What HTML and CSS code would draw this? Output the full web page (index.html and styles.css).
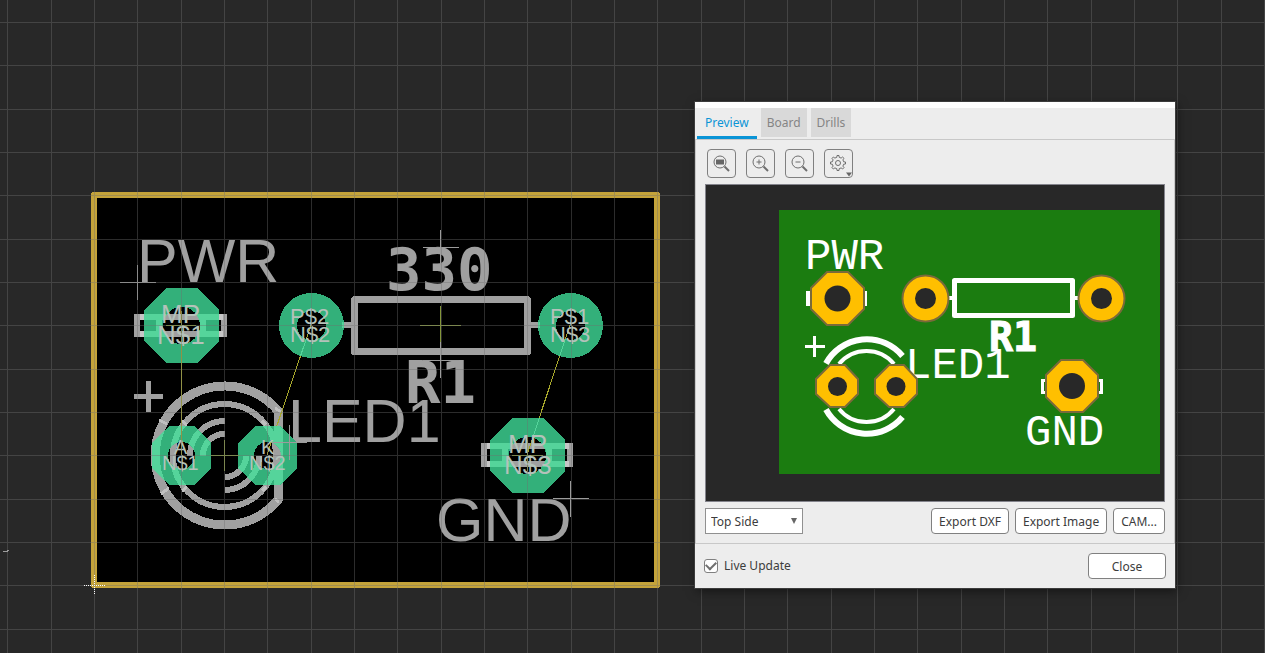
FILE: index.html
```html
<!DOCTYPE html>
<html lang="en">
<head>
<meta charset="utf-8">
<title>Board editor</title>
<link rel="stylesheet" href="styles.css">
</head>
<body>
<main class="workspace">
<svg class="board" role="img" aria-label="Board layout">
  <defs>
    <pattern id="grid" x="7" y="22" width="130" height="130" patternUnits="userSpaceOnUse">
      <path class="grid-line" d="M0 0h1v130h-1zM44 0h1v130h-1zM87 0h1v130h-1zM0 0h130v1h-130zM0 43h130v1h-130zM0 87h130v1h-130z"/>
    </pattern>
    <path id="pads" clip-rule="evenodd" fill-rule="evenodd" d="M167 288H197L219 310V341L197 363H167L144 341V310zM163 325.500a18.500 18.500 0 1 0 37 0a18.500 18.500 0 1 0-37 0z
      M512 418H543L565 440V471L543 493H512L490 471V440zM509 455.500a18.500 18.500 0 1 0 37 0a18.500 18.500 0 1 0-37 0z
      M169 426H194L211 443V468L194 485H169L152 468V443zM168 455.500a13.500 13.500 0 1 0 27 0a13.500 13.500 0 1 0-27 0z
      M255 426H280L297 443V468L280 485H255L238 468V443zM254 455.500a13.500 13.500 0 1 0 27 0a13.500 13.500 0 1 0-27 0z
      M279 325.500a32.500 32.500 0 1 0 65 0a32.500 32.500 0 1 0-65 0zM297 325.500a14.500 14.500 0 1 0 29 0a14.500 14.500 0 1 0-29 0z
      M538 325.500a32.500 32.500 0 1 0 65 0a32.500 32.500 0 1 0-65 0zM556 325.500a14.500 14.500 0 1 0 29 0a14.500 14.500 0 1 0-29 0z"/>
    <clipPath id="pad-clip"><use href="#pads"/></clipPath>
    <g id="silk" fill="none" stroke="currentColor">
      <path stroke-width="6" d="M137 314V337M224 314V337M139 317H222M139 334H222M159 317V334M203 317V334"/>
      <path stroke-width="6" d="M484 443V467M570 443V467M486 446H568M486 464H568M505 446V464M549 446V464"/>
      <path stroke-width="7" stroke-linejoin="round" d="M354.500 299.500H527.500V351.500H354.500z"/>
      <path stroke-width="6" d="M342 325H352M530 325H540"/>
      <path stroke-width="9" stroke-linejoin="round" d="M278.500 411.500A69.500 69.500 0 1 0 278.500 499.500z"/>
      <circle stroke-width="6" cx="224.500" cy="455.500" r="51.500"/>
      <path stroke-width="6" d="M190 455.500A34.500 34.500 0 0 1 224.500 421M203 455.500A21.500 21.500 0 0 1 224.500 434M259 455.500A34.500 34.500 0 0 1 224.500 490M246 455.500A21.500 21.500 0 0 1 224.500 477"/>
      <path stroke-width="5" d="M134 396H163M148.500 381V412"/>
    </g>
  </defs>
  <rect class="outline" x="94" y="195" width="563" height="390"/>
  <use class="silk" href="#silk"/>
  <path class="joint" d="M140 317H144M140 334H144M219 317H223M219 334H223M487 446H490M487 464H490M565 446H569M565 464H569"/>
  <path class="joint-fine" d="M159 420L167 424M161 494L169 488M182 421L187 425M182 491L187 487M262 421L266 425M262 491L266 487M275 408L281 412M275 499L279 502"/>
  <g class="label">
    <text x="137" y="282">PWR</text>
    <text x="288" y="442">LED1</text>
    <text x="436" y="541">GND</text>
  </g>
  <g class="label-bold">
    <text x="386" y="290">330</text>
    <text x="405" y="403">R1</text>
  </g>
  <use class="copper" href="#pads"/>
  <g clip-path="url(#pad-clip)"><use class="lit" href="#silk"/></g>
  <path class="airwire" d="M181.500 325V455M311 325L267 455M570 325L527 455"/>
  <path class="airwire-lit" clip-path="url(#pad-clip)" d="M311 325L267 455M570 325L527 455"/>
  <path class="cross-part" d="M166 325.500H196M181.500 311V340M420 325.500H461M440.500 306V346M211 455.500H239M224.500 440V471M512 455.500H543M527.500 440V471"/>
  <path class="cross-text" d="M120 282.500H156M137.500 265V300M423 247.500H459M440.500 230V265M423 360.500H459M440.500 342V378M553 498.500H589M570.500 481V517M272 442.500H307M289.500 425V460"/>
  <g class="pin-large">
    <text x="161" y="323">MP</text><text x="157" y="344">N$1</text>
    <text x="508" y="453">MP</text><text x="504" y="474">N$3</text>
  </g>
  <g class="pin-medium">
    <text x="290" y="324">P$2</text><text x="290" y="342">N$2</text>
    <text x="550" y="324">P$1</text><text x="550" y="342">N$3</text>
  </g>
  <g class="pin-small">
    <text x="174" y="454">A</text><text x="162" y="470">N$1</text>
    <text x="261" y="454">K</text><text x="249" y="470">N$2</text>
  </g>
  <rect width="100%" height="100%" fill="url(#grid)"/>
  <path class="origin" d="M84 585.500H105M94.500 575V595"/>
  <path class="cross-text" d="M3 551.500H8M7 550.500H9"/>
</svg>

<section class="dialog" aria-label="Manufacturing preview">
  <div class="tabs" role="tablist">
    <button class="tab tab-active" role="tab" aria-selected="true">Preview</button>
    <button class="tab" role="tab">Board</button>
    <button class="tab" role="tab">Drills</button>
  </div>
  <div class="panel">
    <div class="toolbar">
      <button class="tool" aria-label="Zoom to fit"><svg class="icon" viewBox="0 0 27 27"><circle cx="12" cy="12" r="6"/><path class="thick" d="M16.500 16.500L21 21"/><path class="solid" d="M8 9.500h8v5h-8z"/></svg></button>
      <button class="tool" aria-label="Zoom in"><svg class="icon" viewBox="0 0 27 27"><circle cx="12" cy="12" r="6"/><path class="thick" d="M16.500 16.500L21 21"/><path d="M9.500 12h5M12 9.500v5"/></svg></button>
      <button class="tool" aria-label="Zoom out"><svg class="icon" viewBox="0 0 27 27"><circle cx="12" cy="12" r="6"/><path class="thick" d="M16.500 16.500L21 21"/><path d="M9.500 12h5"/></svg></button>
      <button class="tool" aria-label="Settings"><svg class="icon" viewBox="0 0 27 27"><path d="M11.800 7.300L12 5.500H14L14.200 7.300L16.100 8.100L17.600 7L19 8.400L17.900 9.900L18.700 11.800L20.500 12V14L18.700 14.200L17.900 16.100L19 17.600L17.600 19L16.100 17.900L14.200 18.700L14 20.500H12L11.800 18.700L9.900 17.900L8.400 19L7 17.600L8.100 16.100L7.300 14.200L5.500 14V12L7.300 11.800L8.100 9.900L7 8.400L8.400 7L9.900 8.100z"/><circle cx="13" cy="13" r="2.500"/><path class="solid" d="M21 22.500h6l-3 4z"/></svg></button>
    </div>
    <div class="preview">
      <svg class="preview-board" viewBox="706 185 458 316" role="img" aria-label="Top side preview">
        <rect class="mask" x="779" y="210" width="381" height="264"/>
        <g class="print">
          <path stroke-width="3" d="M807.500 292.500H865.500V304.500H807.500zM809.500 292V305M1042.500 380.500H1101.500V392.500H1042.500z"/>
          <path stroke-width="5" stroke-linejoin="round" d="M954.500 280.500H1072.500V315.500H954.500z"/>
          <path stroke-width="4" d="M948 298H953M1074 298H1079"/>
          <path stroke-width="6" d="M826 363.500A46.500 46.500 0 0 1 902.500 356M826 409.500A46.500 46.500 0 0 0 902.500 417"/>
          <path stroke-width="4" d="M839 364A35.500 35.500 0 0 1 894 364M839 409A35.500 35.500 0 0 0 894 409"/>
          <path stroke-width="3" d="M805 346.500H825M814.500 336V357"/>
        </g>
        <g class="print-text">
          <text x="805" y="269">PWR</text>
          <text x="905" y="378">LED1</text>
          <text x="1025" y="445">GND</text>
        </g>
        <text class="print-bold" x="989" y="351">R1</text>
        <g class="plated">
          <path d="M827 272H848L864 288V309L848 325H827L811 309V288zM1061 360H1083L1098 375V397L1083 412H1061L1046 397V375zM830 365H845L858 379V394L845 407H830L816 394V379zM889 365H904L917 379V394L904 407H889L875 394V379z"/>
          <circle cx="925.500" cy="298.500" r="23"/>
          <circle cx="1101.500" cy="298.500" r="23"/>
        </g>
        <g class="drill">
          <circle cx="837.500" cy="298.500" r="13"/><circle cx="1072" cy="386" r="13"/>
          <circle cx="925.500" cy="298.500" r="10.500"/><circle cx="1101.500" cy="298.500" r="10.500"/>
          <circle cx="837.500" cy="386.500" r="9.500"/><circle cx="896" cy="386.500" r="9.500"/>
        </g>
      </svg>
    </div>
    <div class="actions">
      <div class="picker">
        <select class="side" aria-label="Board side"><option>Top Side</option><option>Bottom Side</option></select>
        <svg class="picker-arrow" viewBox="0 0 6 6"><path d="M0 0h6l-3 6z"/></svg>
      </div>
      <button class="button export">Export DXF</button>
      <button class="button export">Export Image</button>
      <button class="button export">CAM...</button>
    </div>
  </div>
  <div class="footer">
    <label class="live"><input class="check" type="checkbox" checked>Live Update</label>
    <button class="button close">Close</button>
  </div>
</section>
</main>
</body>
</html>
```
FILE: styles.css
```css
* { box-sizing: border-box; }

body { margin: 0; background: #282828; }

.workspace {
  position: relative;
  min-height: 100vh;
  overflow: hidden;
  font: 12px/16px "Noto Sans", "Open Sans", sans-serif;
  color: #3c3c3c;
}

.board { position: absolute; inset: 0; width: 100%; height: 100%; shape-rendering: crispEdges; }
.grid-line { fill: rgba(110, 110, 110, .4); }
.outline { fill: #000; stroke: #c4a33a; stroke-width: 6; stroke-linejoin: round; }
.silk { color: #a0a0a0; }
.joint { stroke: #c6c6c6; stroke-width: 6; }
.joint-fine { stroke: #c0c0c0; stroke-width: 3; }
.copper { fill: #33b07a; }
.lit { color: #55d49b; }
.label { font: 61px "Liberation Sans", Arial, sans-serif; fill: #a0a0a0; }
.label-bold { font: bold 59px "DejaVu Sans Mono", monospace; fill: #a0a0a0; }
.airwire { fill: none; stroke: #a8a82c; }
.airwire-lit { fill: none; stroke: #55d49b; }
.cross-part { stroke: #84963a; }
.cross-text { stroke: #9c9c9c; }
.pin-large, .pin-medium, .pin-small { font-family: "Liberation Sans", Arial, sans-serif; fill: #b4c2ba; }
.pin-large { font-size: 26px; }
.pin-medium { font-size: 22px; }
.pin-small { font-size: 20px; }
.origin { stroke: #fff; stroke-dasharray: 1 1; }

.dialog {
  position: absolute;
  left: 695px;
  top: 102px;
  width: 480px;
  background: #ededed;
  border-top: 6px solid #fff;
  box-shadow: 0 0 0 1px #3c3c3c, 2px 3px 10px rgba(0, 0, 0, .5);
}

.tabs { display: flex; gap: 4px; height: 31px; padding-left: 2px; }
.tab {
  height: 29px;
  padding: 0 6px;
  border: 0;
  background: #d9d9d9;
  color: #858585;
  font: inherit;
}
.tab-active { height: 31px; padding: 2px 8px 0; background: none; color: #0a94d6; border-bottom: 3px solid #0a94d6; }

.panel { border: 1px solid #c8c8c8; padding: 9px 9px; }
.toolbar { display: flex; gap: 10px; padding: 0 2px; margin-bottom: 6px; }
.tool {
  width: 29px;
  height: 29px;
  padding: 0;
  border: 1px solid #808080;
  border-radius: 4px;
  background: none;
}
.icon { display: block; width: 27px; height: 27px; fill: none; stroke: #6e6e6e; }
.icon .thick { stroke-width: 2; }
.icon .solid { fill: #666; stroke: none; }

.preview { border: 1px solid #84848c; background: #282828; }
.preview-board { display: block; width: 100%; }
.mask { fill: #1b7c10; }
.print { fill: none; stroke: #fff; }
.print-text { font: 44px "Liberation Mono", monospace; fill: #fff; }
.print-bold { font: bold 40px "DejaVu Sans Mono", monospace; fill: #fff; stroke: #fff; }
.plated { fill: #ffbf00; stroke: #7a6a3a; stroke-width: 2; }
.drill { fill: #282828; }

.actions { display: flex; gap: 6px; margin-top: 6px; }
.picker { position: relative; width: 98px; margin-right: auto; }
.side {
  appearance: none;
  width: 100%;
  height: 26px;
  padding: 2px 5px 0;
  border: 1px solid #909090;
  border-radius: 0;
  background: #fff;
  color: inherit;
  font: inherit;
}
.picker-arrow { position: absolute; right: 6px; top: 10px; width: 6px; height: 6px; fill: #666; pointer-events: none; }
.button {
  height: 26px;
  padding: 2px 7px 0;
  border: 1px solid #808080;
  border-radius: 4px;
  background: #fff;
  color: inherit;
  font: inherit;
}

.footer { display: flex; align-items: center; justify-content: space-between; padding: 9px; }
.live { display: flex; align-items: center; gap: 6px; }
.check {
  appearance: none;
  width: 14px;
  height: 14px;
  margin: 0;
  border: 1px solid #808080;
  border-radius: 3px;
  background: #fff;
  display: grid;
  place-items: center;
}
.check:checked::before {
  content: "";
  width: 8px;
  height: 5px;
  border-left: 2px solid #707070;
  border-bottom: 2px solid #707070;
  transform: rotate(-45deg);
  margin-bottom: 3px;
}
.close { width: 78px; }
```
